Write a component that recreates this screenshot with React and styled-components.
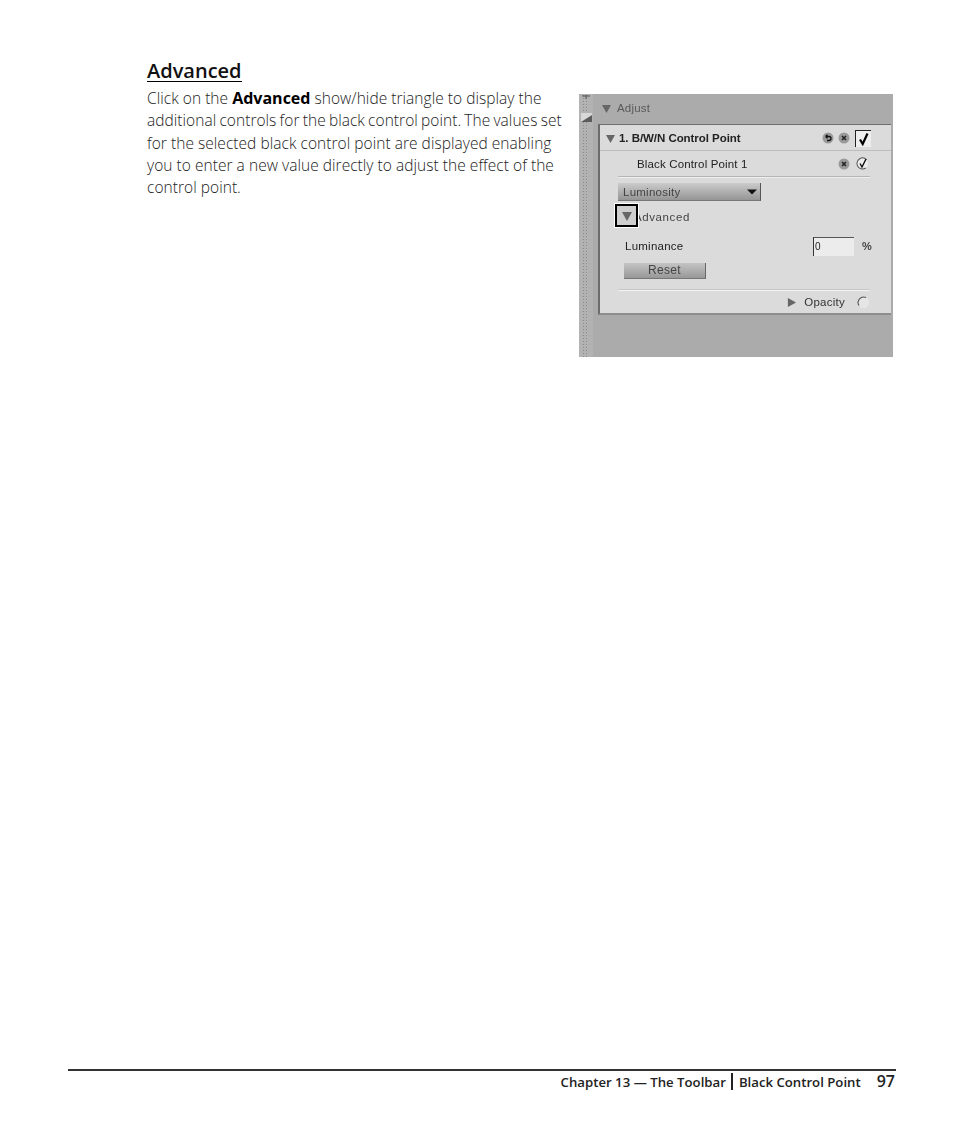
import React from "react";
import styled, { createGlobalStyle } from "styled-components";

const Global = createGlobalStyle`
  html, body { margin: 0; padding: 0; background: #fff; }
`;

const Page = styled.div`
  width: 954px;
  height: 1123px;
  display: flex;
  flex-direction: column;
  justify-content: space-between;
  box-sizing: border-box;
  padding: 60px 58px 29px 68px;
  font-family: "Open Sans", "Noto Sans", sans-serif;
  color: #111;
`;

const Content = styled.main`
  display: grid;
  grid-template-columns: 432px 314px;
  padding-left: 79px;
`;

const Heading = styled.h1`
  display: inline-block;
  margin: 0 0 5px;
  font-size: 20px;
  line-height: 21px;
  font-weight: 600;
  border-bottom: 1.5px solid #000;
`;

const Body = styled.p`
  margin: 0;
  width: 425px;
  font-size: 15.5px;
  line-height: 22.3px;
  letter-spacing: 0.04px;
  white-space: nowrap;
  color: #222;
  font-weight: 300;
  b { font-weight: 700; font-size: 16px; line-height: 1; letter-spacing: 0; color: #000; }
`;

const Tight = styled.span`
  word-spacing: -0.85px;
`;

const Shot = styled.figure`
  margin: 34px 0 0;
  width: 314px;
  height: 263px;
  display: flex;
  background: #ababab;
  font-family: "Liberation Sans", Arial, sans-serif;
  font-size: 11.5px;
  color: #333;
  filter: blur(0.35px);
`;

const Gripper = styled.div`
  width: 14px;
  flex: none;
  box-sizing: border-box;
  padding-top: 1px;
  background:
    radial-gradient(circle, #8a8a8a 0.7px, transparent 0.9px) 3px 0 / 3px 3px repeat-y,
    radial-gradient(circle, #8a8a8a 0.7px, transparent 0.9px) 6px 0 / 3px 3px repeat-y,
    #b2b2b2;
  display: flex;
  flex-direction: column;
  align-items: center;
  gap: 14px;
`;

const Work = styled.div`
  flex: 1;
  min-width: 0;
  padding-left: 5px;
  display: flex;
  flex-direction: column;
`;

const AdjustBar = styled.div`
  height: 30px;
  display: flex;
  align-items: center;
  gap: 6px;
  padding-left: 4px;
  letter-spacing: 0.2px;
  color: #5a5a5a;
  padding-bottom: 2px;
  box-sizing: border-box;
`;

const Card = styled.section`
  height: 191px;
  margin-right: 2px;
  box-sizing: border-box;
  background: #dbdbdb;
  border-top: 1px solid #6f6f6f;
  border-left: 2px solid #6b6b6b;
  border-bottom: 2px solid #8d8d8d;
  display: flex;
  flex-direction: column;
`;

const CardHead = styled.header`
  height: 26px;
  box-sizing: border-box;
  display: flex;
  align-items: center;
  gap: 4px;
  padding: 1px 20px 0 6px;
  border-bottom: 1px solid #bdbdbd;
  font-weight: 700;
  letter-spacing: -0.05px;
  color: #222;
`;

const Spacer = styled.span`
  flex: 1;
`;

const Check = styled.span`
  width: 16px;
  height: 17px;
  margin-left: 1px;
  background: #eeeeee;
  border-left: 1px solid #222;
  border-top: 1px solid #222;
  box-sizing: border-box;
  display: flex;
  align-items: center;
  justify-content: center;
`;

const PointRow = styled.div`
  height: 26px;
  margin: 0 21px 0 18px;
  box-sizing: border-box;
  display: flex;
  align-items: center;
  gap: 6px;
  padding: 0 1px 0 19px;
  letter-spacing: 0.15px;
  color: #222;
  border-bottom: 1px solid #b5b5b5;
  box-shadow: 0 1px 0 #efefef;
`;

const Select = styled.div`
  width: 143px;
  height: 18px;
  margin: 6px 0 0 18px;
  box-sizing: border-box;
  display: flex;
  align-items: center;
  justify-content: space-between;
  padding: 0 3px 0 5px;
  letter-spacing: 0.25px;
  color: #444;
  background: linear-gradient(#cbcbcb, #959595);
  border-right: 1px solid #555;
  border-bottom: 1px solid #777;
`;

const AdvancedRow = styled.div`
  position: relative;
  height: 32px;
  margin-left: 34px;
  display: flex;
  align-items: center;
  color: #444;
  letter-spacing: 0.6px;
`;

const Highlight = styled.span`
  position: absolute;
  left: -19px;
  top: 3px;
  width: 23px;
  height: 23px;
  box-sizing: border-box;
  background: #cfcfcf;
  border: 2px solid #000;
  outline: 1px solid #fff;
  display: flex;
  align-items: center;
  justify-content: center;
`;

const LumRow = styled.div`
  height: 20px;
  margin: 3px 0 0 25px;
  padding-right: 19px;
  display: flex;
  align-items: center;
  justify-content: space-between;
  color: #222;
  letter-spacing: 0.25px;
`;

const LumInput = styled.span`
  width: 41px;
  height: 19px;
  margin-left: auto;
  margin-right: 8px;
  box-sizing: border-box;
  padding-left: 1px;
  line-height: 18px;
  background: #ececec;
  border-left: 1px solid #333;
  border-top: 1px solid #555;
  font-size: 10px;
`;

const Percent = styled.span`
  font-weight: 700;
  font-size: 11px;
  color: #444;
`;

const ResetButton = styled.div`
  width: 82px;
  height: 16px;
  margin: 7px 0 0 24px;
  box-sizing: border-box;
  text-align: center;
  line-height: 15px;
  font-size: 12px;
  letter-spacing: 0.3px;
  color: #444;
  background: linear-gradient(#c4c4c4, #989898);
  border-right: 1px solid #666;
  border-bottom: 1px solid #777;
`;

const WhiteRule = styled.div`
  height: 1px;
  margin: 11px 21px 0 18px;
  background: #f4f4f4;
  box-shadow: 0 -1px 0 #c4c4c4;
`;

const OpacityRow = styled.div`
  flex: 1;
  display: flex;
  align-items: center;
  justify-content: flex-end;
  gap: 8px;
  padding-right: 21px;
  color: #333;
  letter-spacing: 0.25px;
`;

const RingSlot = styled.span`
  margin-left: 4px;
  display: flex;
`;

const Footer = styled.footer`
  border-top: 2px solid #333;
  height: 25px;
  box-sizing: border-box;
  padding: 0 1px 2px 0;
  display: flex;
  justify-content: flex-end;
  align-items: center;
  font-weight: 600;
  font-size: 13.2px;
  color: #222;
`;

const Separator = styled.span`
  width: 2px;
  height: 17px;
  margin: 0 6px 0 5px;
  background: #222;
`;

const PageNo = styled.span`
  font-size: 16px;
  margin-left: 16px;
  margin-top: -2px;
  font-weight: 600;
`;

const Tri = ({ dir = "down", size = 9, color = "#666" }) => (
  <svg width={size} height={size} viewBox="0 0 10 10" style={{ flex: "none" }}>
    <path
      d={
        dir === "down"
          ? "M0 1h10L5 10z"
          : dir === "flat"
            ? "M0 2.5h10L5 7.5z"
            : "M1 0l9 5-9 5z"
      }
      fill={color}
    />
  </svg>
);

const RoundIcon = ({ type }) => (
  <svg width="12" height="12" viewBox="0 0 12 12" style={{ flex: "none" }}>
    <circle cx="6" cy="6" r="5.5" fill="#9a9a9a" />
    {type === "x" ? (
      <path d="M4 4l4 4M8 4l-4 4" stroke="#222" strokeWidth="1.5" />
    ) : (
      <path d="M3.5 4.5H7a2 2 0 010 4H5M3.5 4.5l2-1.7M3.5 4.5l2 1.7" stroke="#111" strokeWidth="1.3" fill="none" />
    )}
  </svg>
);

const TickMark = ({ size = 14 }) => (
  <svg width={size} height={size} viewBox="0 0 14 14">
    <path d="M3 7.5L5.7 12L10.5 1.5" stroke="#000" strokeWidth="2.2" fill="none" />
  </svg>
);

const CircleTick = () => (
  <svg width="13" height="13" viewBox="0 0 13 13" style={{ flex: "none" }}>
    <circle cx="6.5" cy="6.5" r="5.5" fill="#eee" stroke="#555" strokeWidth="1" strokeDasharray="24 9" transform="rotate(60 6.5 6.5)" />
    <path d="M4 6.5l2 3.5L10 2" stroke="#111" strokeWidth="1.4" fill="none" />
  </svg>
);

const Ring = () => (
  <svg width="13" height="13" viewBox="0 0 13 13" style={{ flex: "none" }}>
    <circle cx="6.5" cy="6.5" r="5.5" fill="#e6e6e6" />
    <path d="M2 9.5A5.5 5.5 0 019 1.6" stroke="#555" strokeWidth="1.1" fill="none" />
  </svg>
);

const GripIcons = () => (
  <>
    <svg width="10" height="4" viewBox="0 0 10 4">
      <path d="M1 1h8M5 0v4" stroke="#555" strokeWidth="1" />
    </svg>
    <svg width="11" height="9" viewBox="0 0 11 9">
      <rect width="11" height="9" fill="#d8d8d8" />
      <path d="M0 9L11 2v7z" fill="#5c5c5c" />
    </svg>
  </>
);

export default function App() {
  return (
    <Page>
      <Global />
      <Content>
        <div>
          <Heading>Advanced</Heading>
          <Body>
            Click on the <b>Advanced</b> show/hide triangle to display the
            <br />
            <Tight>additional controls for the black control point. The values set</Tight>
            <br />
            for the selected black control point are displayed enabling
            <br />
            you to enter a new value directly to adjust the effect of the
            <br />
            control point.
          </Body>
        </div>
        <Shot>
          <Gripper>
            <GripIcons />
          </Gripper>
          <Work>
            <AdjustBar>
              <Tri />
              Adjust
            </AdjustBar>
            <Card>
              <CardHead>
                <Tri />
                1. B/W/N Control Point
                <Spacer />
                <RoundIcon type="undo" />
                <RoundIcon type="x" />
                <Check>
                  <TickMark />
                </Check>
              </CardHead>
              <PointRow>
                Black Control Point 1
                <Spacer />
                <RoundIcon type="x" />
                <CircleTick />
              </PointRow>
              <Select>
                Luminosity
                <Tri dir="flat" size={10} color="#111" />
              </Select>
              <AdvancedRow>
                Advanced
                <Highlight>
                  <Tri size={10} />
                </Highlight>
              </AdvancedRow>
              <LumRow>
                Luminance
                <LumInput>0</LumInput>
                <Percent>%</Percent>
              </LumRow>
              <ResetButton>Reset</ResetButton>
              <WhiteRule />
              <OpacityRow>
                <Tri dir="right" />
                Opacity
                <RingSlot>
                  <Ring />
                </RingSlot>
              </OpacityRow>
            </Card>
          </Work>
        </Shot>
      </Content>
      <Footer>
        Chapter 13 — The Toolbar
        <Separator />
        Black Control Point
        <PageNo>97</PageNo>
      </Footer>
    </Page>
  );
}
